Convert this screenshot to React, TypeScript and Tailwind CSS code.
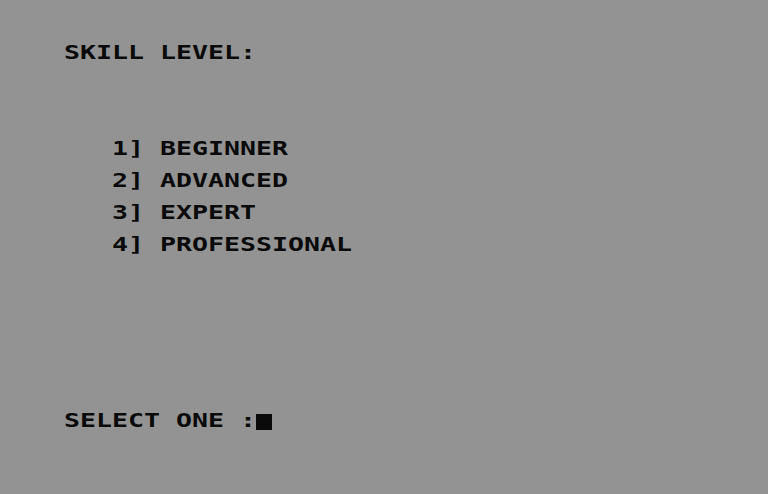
import React from "react";

const Line = ({ children, className = "" }: { children: React.ReactNode; className?: string }) => (
  <div className={"flex h-[16px] items-start whitespace-pre " + className}>{children}</div>
);

const T = ({ children }: { children: React.ReactNode }) => (
  <span className="block origin-top translate-y-[0.5px] scale-y-[0.72] leading-[22px]">{children}</span>
);

export default function App() {
  return (
    <div
      className="flex h-[494px] w-[768px] flex-col overflow-hidden bg-[#939393] pl-[64px] pt-[44px] text-[26.58px] font-bold tracking-[0px] text-[#0a0a0a]"
      style={{ fontFamily: '"DejaVu Sans Mono", "Liberation Mono", monospace' }}
    >
      <Line>
        <T>SKILL LEVEL:</T>
      </Line>
      <div className="mt-[80px] flex flex-col gap-[16px]">
        <Line>
          <T>{"   1] BEGINNER"}</T>
        </Line>
        <Line>
          <T>{"   2] ADVANCED"}</T>
        </Line>
        <Line>
          <T>{"   3] EXPERT"}</T>
        </Line>
        <Line>
          <T>{"   4] PROFESSIONAL"}</T>
        </Line>
      </div>
      <Line className="mt-[160px]">
        <T>SELECT ONE :</T>
        <span className="mt-[2px] inline-block h-[16px] w-[16px] bg-[#0a0a0a]" />
      </Line>
    </div>
  );
}
